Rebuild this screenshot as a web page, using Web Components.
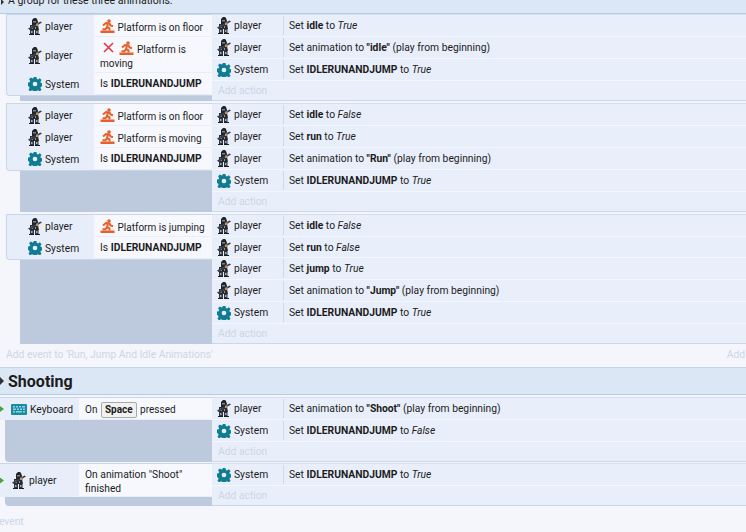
<!DOCTYPE html>
<html>
<head>
<meta charset="utf-8">
<style>
  html, body { margin: 0; padding: 0; height: 100%; overflow: hidden; }
  body { background: #f4f6fc; font: 10.3px Roboto, "Noto Sans", sans-serif; color: #1c1c1c; }
</style>
</head>
<body>
<event-sheet>
  <group-head small>A group for these three animations.</group-head>

  <event-block>
    <event-cond slot="cond" kind="player" name="player"><beh-icon></beh-icon> Platform is on floor</event-cond>
    <event-cond slot="cond" kind="player" name="player" tall><cross-icon></cross-icon> <beh-icon></beh-icon> Platform is moving</event-cond>
    <event-cond slot="cond" kind="system" name="System">Is <b>IDLERUNANDJUMP</b></event-cond>
    <event-act kind="player" name="player">Set <b>idle</b> to <i>True</i></event-act>
    <event-act kind="player" name="player">Set animation to <b>"idle"</b> (play from beginning)</event-act>
    <event-act kind="system" name="System">Set <b>IDLERUNANDJUMP</b> to <i>True</i></event-act>
  </event-block>

  <event-block>
    <event-cond slot="cond" kind="player" name="player"><beh-icon></beh-icon> Platform is on floor</event-cond>
    <event-cond slot="cond" kind="player" name="player"><beh-icon></beh-icon> Platform is moving</event-cond>
    <event-cond slot="cond" kind="system" name="System">Is <b>IDLERUNANDJUMP</b></event-cond>
    <event-act kind="player" name="player">Set <b>idle</b> to <i>False</i></event-act>
    <event-act kind="player" name="player">Set <b>run</b> to <i>True</i></event-act>
    <event-act kind="player" name="player">Set animation to <b>"Run"</b> (play from beginning)</event-act>
    <event-act kind="system" name="System">Set <b>IDLERUNANDJUMP</b> to <i>True</i></event-act>
  </event-block>

  <event-block>
    <event-cond slot="cond" kind="player" name="player"><beh-icon></beh-icon> Platform is jumping</event-cond>
    <event-cond slot="cond" kind="system" name="System">Is <b>IDLERUNANDJUMP</b></event-cond>
    <event-act kind="player" name="player">Set <b>idle</b> to <i>False</i></event-act>
    <event-act kind="player" name="player" short>Set <b>run</b> to <i>False</i></event-act>
    <event-act kind="player" name="player">Set <b>jump</b> to <i>True</i></event-act>
    <event-act kind="player" name="player">Set animation to <b>"Jump"</b> (play from beginning)</event-act>
    <event-act kind="system" name="System">Set <b>IDLERUNANDJUMP</b> to <i>True</i></event-act>
  </event-block>

  <add-row right="Add action">Add event to 'Run, Jump And Idle Animations'</add-row>

  <group-head>Shooting</group-head>

  <event-block top>
    <event-cond slot="cond" top kind="keyboard" name="Keyboard">On <key-cap>Space</key-cap> pressed</event-cond>
    <event-act kind="player" name="player">Set animation to <b>"Shoot"</b> (play from beginning)</event-act>
    <event-act kind="system" name="System">Set <b>IDLERUNANDJUMP</b> to <i>False</i></event-act>
  </event-block>

  <event-block top>
    <event-cond slot="cond" top kind="player" name="player" two>On animation "Shoot" finished</event-cond>
    <event-act kind="system" name="System">Set <b>IDLERUNANDJUMP</b> to <i>True</i></event-act>
  </event-block>

  <add-row clipped>Add event</add-row>
</event-sheet>

<script>
// icons shared by the rows
const ICONS = {
    player: `<svg width="14" height="17" viewBox="0 0 14 17">
        <path d="M4 2l2-2h2l1 1 1 3-1 3H4z" fill="#20242b"/>
        <path d="M5 3h3v1.500H5z" fill="#7d8794"/>
        <path d="M2 7h8l1 5H2z" fill="#262b33"/>
        <path d="M3 8h2v3H3zM7 9h1v2H7z" fill="#8a94a1"/>
        <path d="M0 10.500L12.500 3.500 14 4.500 1.500 12z" fill="#39404a"/>
        <path d="M8 5.500h2.500V8H8z" fill="#c78d52"/>
        <path d="M2 12h4v4H2zM7 12h3.500v4H7z" fill="#2f343d"/>
        <path d="M3 13h1.500v2H3zM8 13h1.500v2H8z" fill="#a3acb8"/>
        <path d="M1 16h5v1H1zM7 16h5v1H7z" fill="#1a1d23"/>
    </svg>`,
    system: `<svg width="14" height="14" viewBox="0 0 24 24"><path fill="#0f7c93" fill-rule="evenodd" d="M9.500 0h5l.7 3.400 2 .8 3-1.900 3 3-1.900 3 .8 2 3.400.7v5l-3.400.7-.8 2 1.900 3-3 3-3-1.900-2 .8-.7 3.400h-5l-.7-3.400-2-.8-3 1.900-3-3 1.900-3-.8-2L-.5 14.500v-5l3.400-.7.8-2-1.900-3 3-3 3 1.900 2-.8zM12 8a4 4 0 1 0 0 8 4 4 0 0 0 0-8z"/></svg>`,
    keyboard: `<svg width="16" height="11" viewBox="0 0 16 11"><rect width="16" height="11" rx="1" fill="#1b8aa3"/><path d="M2 2h2v1.500H2zM5 2h2v1.500H5zM8 2h2v1.500H8zM11 2h3v1.500h-3zM2 4.500h3V6H2zM6 4.500h2V6H6zM9 4.500h2V6H9zM12 4.500h2V6h-2zM2 7h2v1.500H2zM5 7h6v1.500H5zM12 7h2v1.500h-2z" fill="#8fd3e2"/></svg>`
};

function makeRoot(el, html) {
    el.attachShadow({mode: "open"}).innerHTML = html;
}

class EventSheet extends HTMLElement {
    constructor() {
        super();
        makeRoot(this, `<style>:host { display: flex; flex-direction: column; width: 746px; height: 532px; overflow: hidden; }</style><slot></slot>`);
    }
}

class GroupHead extends HTMLElement {
    constructor() {
        super();
        let small = this.hasAttribute("small");
        makeRoot(this, `<style>
            :host { display: flex; align-items: ${small ? "flex-end" : "center"}; flex: none; overflow: hidden;
                height: ${small ? 13 : 26}px; background: #dbe7f5; border-bottom: 1px solid #b4cce5;
                border-top: ${small ? 0 : 1}px solid #c3d4e8; gap: 3px; margin-bottom: ${small ? 0 : 2}px; }
            .arrow { width: 0; height: 0; border-left: ${small ? 3 : 4}px solid #333; border-top: ${small ? 3 : 4}px solid transparent;
                border-bottom: ${small ? 3 : 4}px solid transparent; margin: ${small ? "0 0 8px 1px" : 0}; flex: none; }
            .t { ${small ? "font-size: 10.500px; line-height: 14px; margin: 0 0 5px 1px;" : "font-size: 16px; font-weight: 700; line-height: 20px; margin: 2px 0 0 1px;"} white-space: nowrap; }
        </style><span class="arrow"></span><span class="t"><slot></slot></span>`);
    }
}

class EventBlock extends HTMLElement {
    constructor() {
        super();
        let top = this.hasAttribute("top");
        makeRoot(this, `<style>
            :host { display: grid; grid-template-columns: 212px 1fr; flex: none; margin-bottom: ${top ? 1 : 2}px; }
            .left { display: flex; flex-direction: column; padding-left: ${top ? 0 : 6}px; }
            .card { display: flex; flex-direction: column; background: #e7eef9; flex: none;
                border: 0 solid #c9d6e8; border-top-width: 1px; ${top ? "" : "border-left-width: 1px; border-bottom-width: 1px; border-bottom-left-radius: 4px;"} }
            .fill { flex: 1; background: #bdc9dc; margin-left: ${top ? 5 : 14}px; ${top ? "border-bottom-left-radius: 4px;" : ""} }
            .right { display: flex; flex-direction: column; background: #e9effa; border-top: 1px solid #d5dfee; border-bottom: 1px solid #ccd8ea; }
            .add { height: 19px; line-height: 19px; padding-left: 6px; color: #cdd6e6; }
        </style>
        <div class="left"><div class="card"><slot name="cond"></slot></div><div class="fill"></div></div>
        <div class="right"><slot></slot><div class="add">Add action</div></div>`);
    }
}

class EventCond extends HTMLElement {
    constructor() {
        super();
        let top = this.hasAttribute("top");
        let wraps = this.hasAttribute("tall") || this.hasAttribute("two");
        let h = this.hasAttribute("tall") ? 36 : this.hasAttribute("two") ? 33 : 22;
        let kind = this.getAttribute("kind");
        // behaviour and key rows run a little tighter than the plain ones
        let tight = this.querySelector("beh-icon, key-cap");
        makeRoot(this, `<style>
            :host { display: grid; grid-template-columns: ${top ? 80 : 88}px 1fr; height: ${h}px; }
            .obj { display: flex; align-items: center; gap: 3px; padding-left: ${top ? (kind == "keyboard" ? 11 : 12) : 21}px; border-right: 1px solid #f4f7fd; position: relative; }
            .go { position: absolute; left: 0; top: calc(50% - 3px); width: 4px; height: 6px; background: #4aa63a; clip-path: polygon(0 0, 100% 50%, 0 100%); }
            .par { background: #f6f8fe; padding: 4px 5px 0; line-height: 14px; margin-bottom: 1px; ${tight ? "font-size: 10px;" : ""} ${wraps ? "" : "white-space: nowrap;"} }
            svg { flex: none; }
        </style>
        <div class="obj">${top ? '<span class="go"></span>' : ""}${ICONS[kind]}<span>${this.getAttribute("name")}</span></div>
        <div class="par"><slot></slot></div>`);
    }
}

class EventAct extends HTMLElement {
    constructor() {
        super();
        let kind = this.getAttribute("kind");
        makeRoot(this, `<style>
            :host { display: grid; grid-template-columns: 72px 1fr; height: ${this.hasAttribute("short") ? 20 : 21}px; border-bottom: 1px solid #f3f6fd; }
            .obj { display: flex; align-items: center; gap: 3px; padding-left: 5px; position: relative; }
            .obj::after { content: ""; position: absolute; right: 0; top: 1px; bottom: 1px; width: 1px; background: #cfd9e8; }
            .par { padding-left: 5px; line-height: 21px; white-space: nowrap; }
            svg { flex: none; }
        </style>
        <div class="obj">${ICONS[kind]}<span>${this.getAttribute("name")}</span></div>
        <div class="par"><slot></slot></div>`);
    }
}

class AddRow extends HTMLElement {
    constructor() {
        super();
        let clipped = this.hasAttribute("clipped");
        let right = this.getAttribute("right");
        makeRoot(this, `<style>
            :host { display: flex; flex: 1; align-items: ${clipped ? "flex-start" : "center"}; color: #cdd6e6; white-space: nowrap; overflow: hidden;
                ${clipped ? "padding: 8px 0 0;" : "flex: none; height: 17px; padding-bottom: 4px;"} }
            .l { margin-left: ${clipped ? -22 : 6}px; }
            .r { margin-left: auto; margin-right: -30px; }
        </style><span class="l"><slot></slot></span>${right ? `<span class="r">${right}</span>` : ""}`);
    }
}

class BehIcon extends HTMLElement {
    constructor() {
        super();
        makeRoot(this, `<style>:host { display: inline-block; width: 15px; height: 15px; vertical-align: -3px; }</style>
        <svg width="15" height="15" viewBox="0 0 15 15"><rect x="0.500" y="11.500" width="14" height="2.500" fill="#e5602a"/>
        <circle cx="9" cy="2" r="1.800" fill="#e5602a"/>
        <path d="M3 6.500L6 4 9.500 4.500 10.500 6.500 13 7.300M8 4.500L7 8 9.500 9.300 9.500 11.500M7 8L5.500 10.300 2.500 10.300" fill="none" stroke="#e5602a" stroke-width="2"/></svg>`);
    }
}

class CrossIcon extends HTMLElement {
    constructor() {
        super();
        makeRoot(this, `<style>:host { display: inline-block; width: 14px; height: 11px; margin: 0 0 0 3px; vertical-align: 0; }</style>
        <svg width="11" height="11" viewBox="0 0 11 11"><path d="M1 1l9 9M10 1l-9 9" stroke="#e8333c" stroke-width="1.500" fill="none"/></svg>`);
    }
}

class KeyCap extends HTMLElement {
    constructor() {
        super();
        makeRoot(this, `<style>:host { display: inline-block; font-weight: 700; line-height: 14px; padding: 0 3px; margin: 0 1px; border: 1px solid #a9a9a9; border-radius: 2px; background: #f1f1f1; }</style><slot></slot>`);
    }
}

customElements.define("event-sheet", EventSheet);
customElements.define("group-head", GroupHead);
customElements.define("event-block", EventBlock);
customElements.define("event-cond", EventCond);
customElements.define("event-act", EventAct);
customElements.define("add-row", AddRow);
customElements.define("beh-icon", BehIcon);
customElements.define("cross-icon", CrossIcon);
customElements.define("key-cap", KeyCap);
</script>
</body>
</html>
